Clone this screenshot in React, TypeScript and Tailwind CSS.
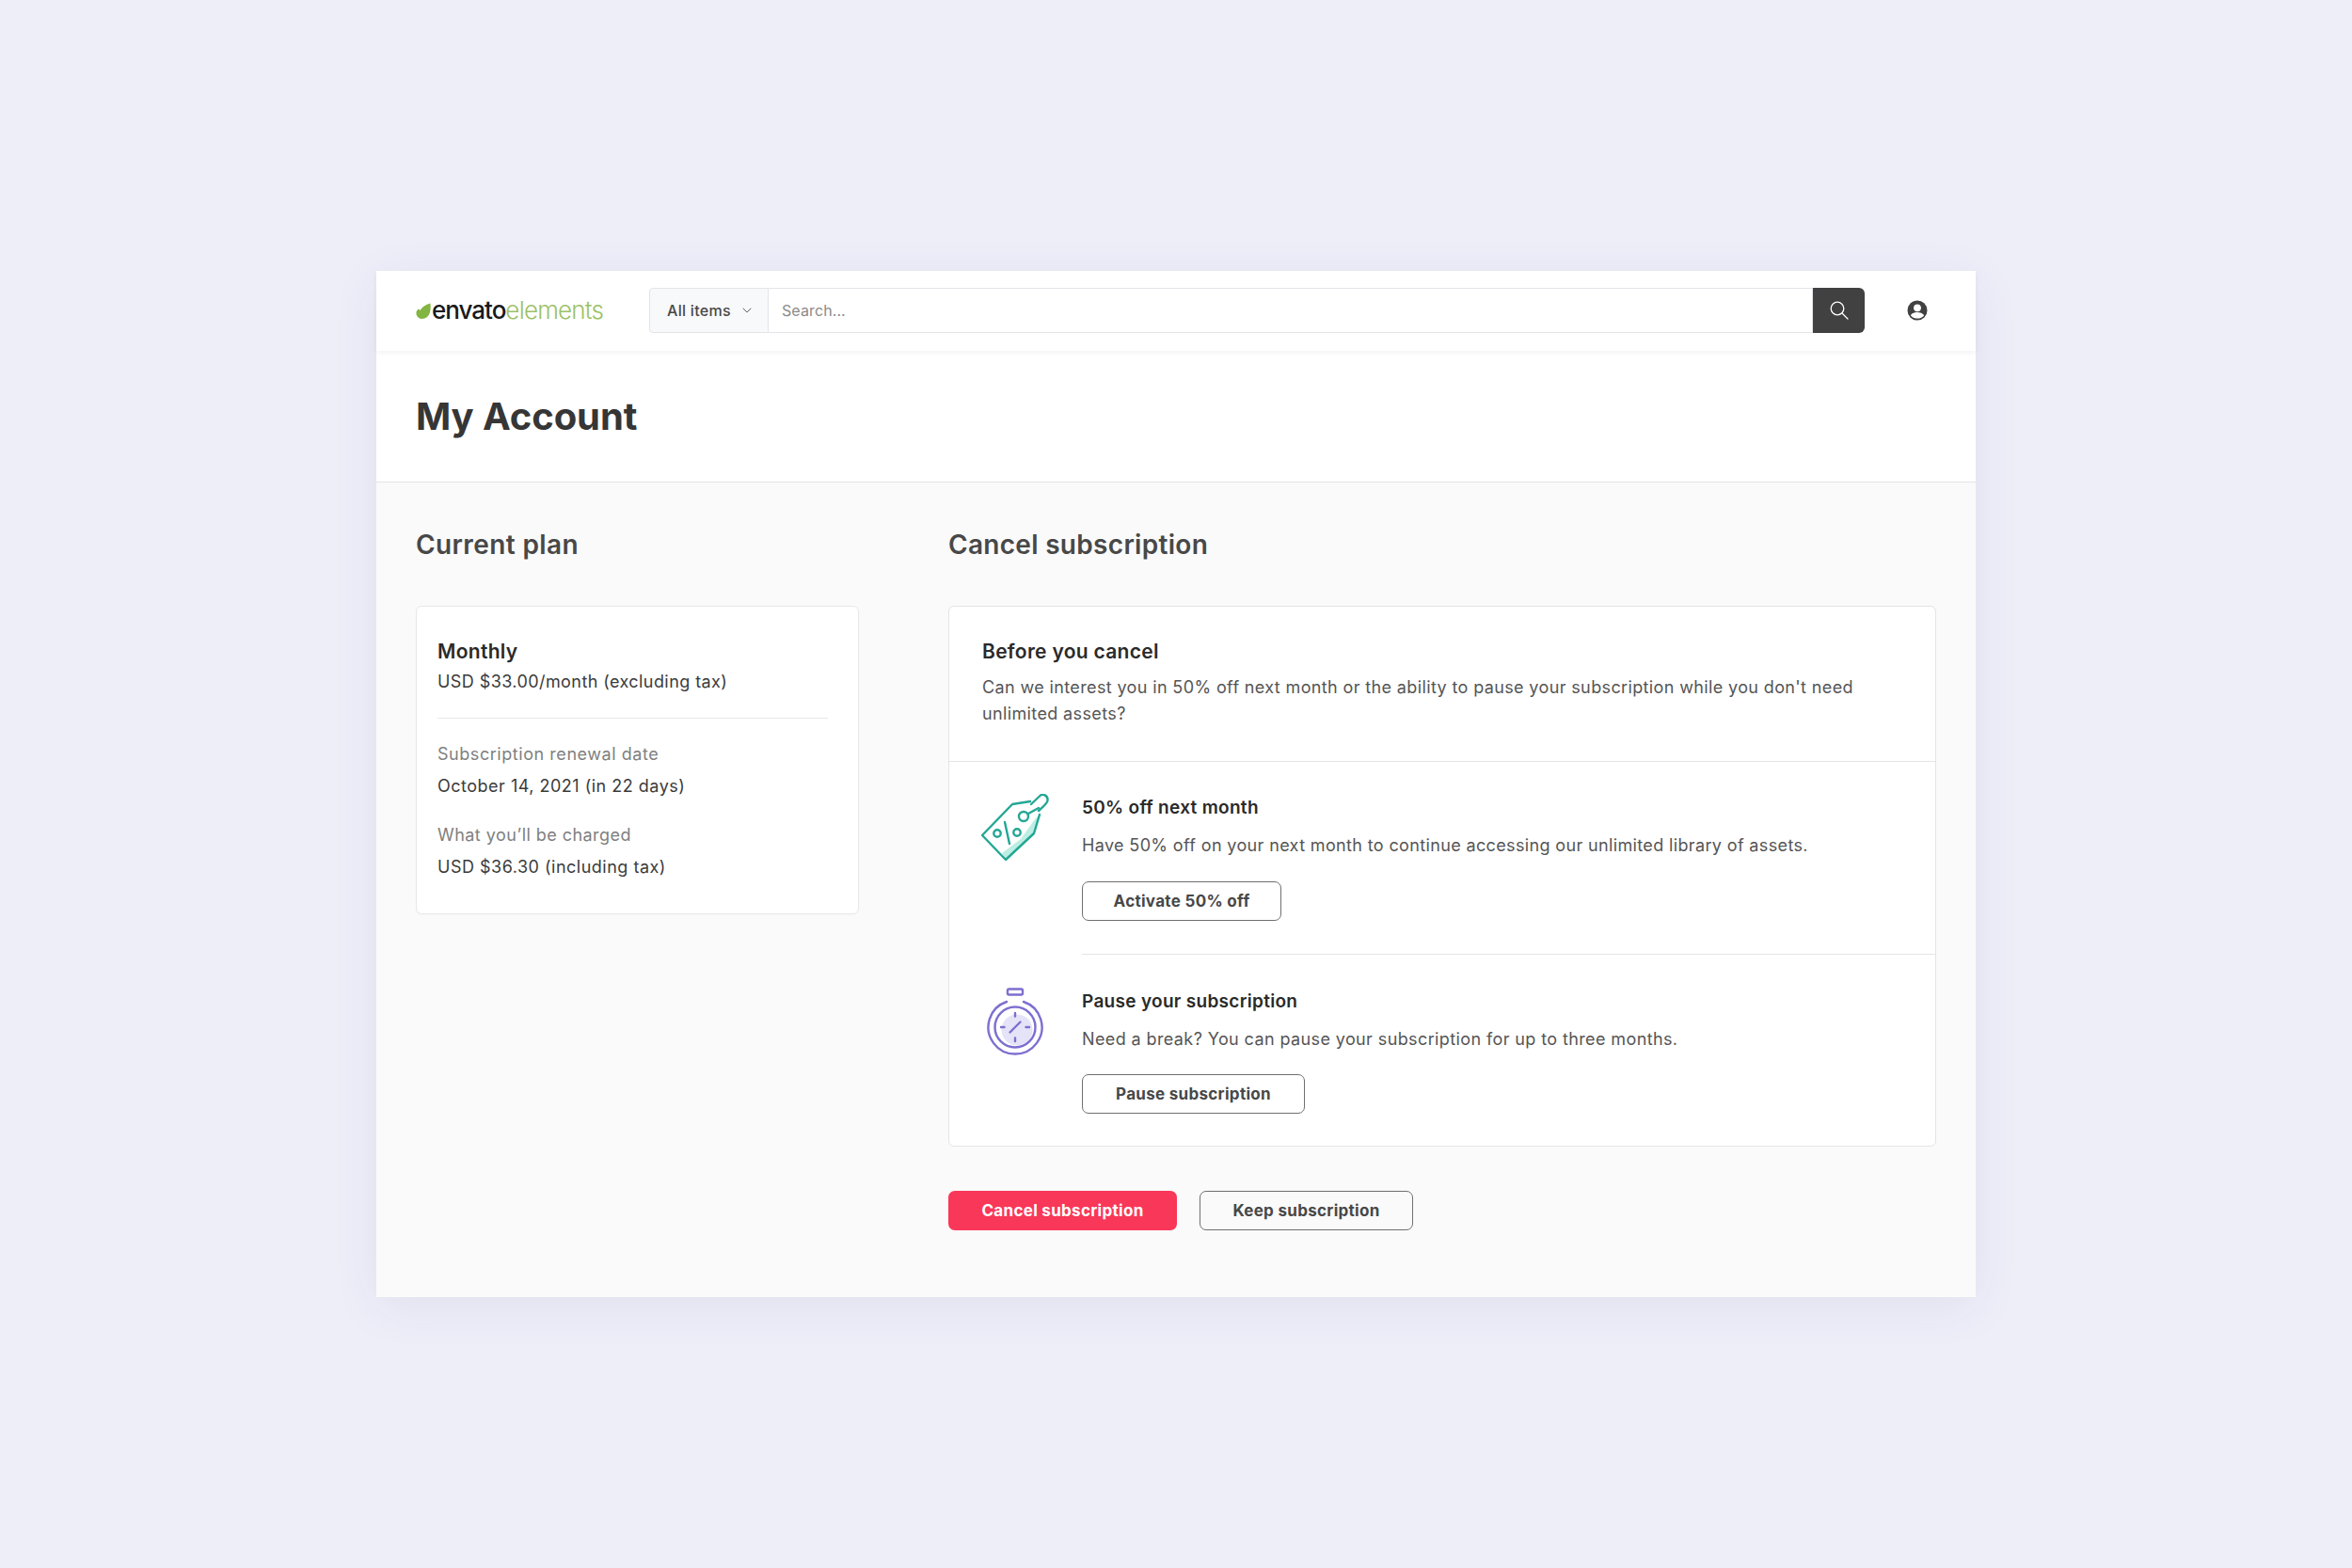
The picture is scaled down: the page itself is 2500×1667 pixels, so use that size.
import React from "react";
import { ChevronDown } from "lucide-react";

const body = "font-['Inter','Liberation_Sans',sans-serif]";
const display = "font-['Inter','Liberation_Sans',sans-serif]";

function Logo() {
  return (
    <div className="flex items-center">
      <svg width="16" height="18" viewBox="0 0 16 18" className="mr-[1px] mt-[1px]">
        <path d="M15.5 0.5C16 7 15.5 12 12 15 8 18 2.6 17.5 0.8 13 -0.2 10 1 7.5 3 6.6 3.8 7 4.2 7.6 4.6 8 6.5 4.5 10 2 15.5 0.5Z" fill="#82b541" />
      </svg>
      <span className="font-['Inter',sans-serif] text-[26px] font-medium leading-none tracking-[-1px] text-[#191919]">envato</span>
      <span className="font-['Inter',sans-serif] text-[26px] font-light leading-none tracking-[-0.8px] text-[#9cc165]">elements</span>
    </div>
  );
}

function TagIcon() {
  return (
    <svg width="74" height="74" viewBox="0 0 74 74" fill="none" stroke="#25a794" strokeWidth="2.4" strokeLinejoin="round" strokeLinecap="round" className="-mt-[1px]">
      <path d="M62 22 L56 42 L26 70 L22 63 L30 57 L42 48 L57 27 Z" fill="#bdeee3" stroke="none" />
      <path d="M52 8 L33 11 L1 44 L26 70 L56 42 L62 22" />
      <path d="M53 11 L63 1.5 C66 -0.5 71 2 70.5 7 C70.5 9 69 11 61 18" />
      <circle cx="45" cy="24" r="5" />
      <path d="M50 21 L61 15" />
      <circle cx="17" cy="42" r="3.7" />
      <circle cx="38" cy="41" r="3.7" />
      <path d="M25 30 L30 53" />
    </svg>
  );
}

function WatchIcon() {
  return (
    <svg width="60" height="72" viewBox="0 0 60 72" fill="none" stroke="#7d6fd0" strokeWidth="2.4" strokeLinecap="round" strokeLinejoin="round" className="-mt-[1px]">
      <circle cx="32" cy="45" r="16.5" fill="#e4e3f7" stroke="none" />
      <rect x="22" y="1.5" width="16" height="6" rx="1.5" />
      <path d="M21 15 A28.5 28.5 0 1 0 39 15" />
      <circle cx="30" cy="42" r="21.5" />
      <path d="M30 27 V30.5 M30 53.5 V57 M15 42 H18.5 M41.5 42 H45" />
      <path d="M24.5 47.5 L35.5 36.5" />
    </svg>
  );
}

function OutlineButton({ children, className }: { children: React.ReactNode; className: string }) {
  return (
    <button className={`flex h-[42px] items-center justify-center rounded-[7px] border-[1.5px] border-[#6f6f6f] pt-[1px] font-['Inter',sans-serif] text-[17px] font-bold tracking-[0.3px] text-[#484848] ${className}`}>
      {children}
    </button>
  );
}

export default function App() {
  return (
    <div className={`flex h-[1667px] items-center justify-center bg-[#edeef8] ${body}`}>
      <div className="w-[1700px] bg-white shadow-[0_10px_50px_rgba(60,60,110,0.07)]">
        <header className="relative flex h-[85px] items-center pl-[42px] pr-[51px] pb-[1px] shadow-[0_2px_6px_rgba(0,0,0,0.05)]">
          <div className="w-[248px]">
            <Logo />
          </div>
          <div className="flex h-[48px] flex-1">
            <div className="flex w-[127px] items-center gap-[9px] rounded-l-[4px] border border-[#e3e4e8] bg-[#f8f9fb] pl-[18px] text-[16px] font-medium tracking-[0.3px] text-[#484848]">
              All items
              <ChevronDown size={16} strokeWidth={1.4} className="text-[#555555]" />
            </div>
            <div className="flex flex-1 items-center border-y border-r border-[#e3e4e8] pl-[14px] text-[16px] tracking-[0.1px] text-[#8b8b8b]">Search...</div>
            <div className="flex w-[55px] items-center justify-center rounded-r-[6px] bg-[#414141]">
              <svg width="20" height="20" viewBox="0 0 20 20" fill="none" stroke="#fff" strokeWidth="1.3" strokeLinecap="round">
                <circle cx="8" cy="8" r="6.8" />
                <path d="M13 13 L19 19" />
              </svg>
            </div>
          </div>
          <svg width="22" height="22" viewBox="0 0 22 22" className="ml-[45px]">
            <circle cx="11" cy="11" r="10.5" fill="#414141" />
            <circle cx="11" cy="8.3" r="3.9" fill="#fff" />
            <path d="M3.8 16.2C5.4 13.7 8 12.9 11 12.9s5.6.8 7.2 3.3C16.5 18.4 14 19.6 11 19.6s-5.5-1.2-7.2-3.4Z" fill="#fff" />
          </svg>
        </header>

        <div className="flex h-[140px] items-center border-b border-[#e4e4e4] pl-[42px] pt-[1px]">
          <h1 className={`${display} text-[40px] font-bold leading-none tracking-[-0.1px] text-[#363636]`}>My Account</h1>
        </div>

        <main className="flex gap-[95px] bg-[#fafafa] px-[42px] pt-[48px] pb-[71px]">
          <section className="w-[471px] shrink-0">
            <h2 className="h-[34px] text-[28px] font-semibold leading-[36px] tracking-[0.4px] text-[#484848]">Current plan</h2>
            <div className="mt-[49px] rounded-[6px] border border-[#e8e8e8] bg-white pl-[22px] pr-[32px] pt-[34px] pb-[35px] shadow-[0_1px_2px_rgba(0,0,0,0.02)]">
              <div className="text-[21px] font-semibold leading-[28px] tracking-[0.3px] text-[#2a2a2a]">Monthly</div>
              <div className="mt-[4px] text-[18px] leading-[28px] tracking-[0.42px] text-[#3b3b3b]">USD $33.00/month (excluding tax)</div>
              <div className="mt-[24px] border-t border-[#e8e8e8]" />
              <div className="mt-[24px] text-[18px] leading-[28px] tracking-[0.55px] text-[#808080]">Subscription renewal date</div>
              <div className="mt-[6px] text-[18px] leading-[28px] tracking-[0.5px] text-[#3b3b3b]">October 14, 2021 (in 22 days)</div>
              <div className="mt-[24px] text-[18px] leading-[28px] tracking-[0.45px] text-[#808080]">What you’ll be charged</div>
              <div className="mt-[6px] text-[18px] leading-[28px] tracking-[0.5px] text-[#3b3b3b]">USD $36.30 (including tax)</div>
            </div>
          </section>

          <section className="flex-1">
            <h2 className="h-[34px] text-[28px] font-semibold leading-[36px] tracking-[0.3px] text-[#484848]">Cancel subscription</h2>
            <div className="mt-[49px] rounded-[6px] border border-[#e4e4e4] bg-white">
              <div className="border-b border-[#e4e4e4] pl-[35px] pr-[60px] pt-[34px] pb-[36px]">
                <div className="text-[21px] font-semibold leading-[28px] tracking-[0.3px] text-[#2a2a2a]">Before you cancel</div>
                <p className="mt-[10px] text-[18px] leading-[28px] tracking-[0.37px] text-[#555555]">
                  Can we interest you in 50% off next month or the ability to pause your subscription while you don't need unlimited assets?
                </p>
              </div>

              <div className="flex pl-[34px] pt-[35px]">
                <div className="w-[107px] shrink-0"><TagIcon /></div>
                <div className="flex-1 border-b border-[#e4e4e4] pb-[35px]">
                  <div className="text-[19px] font-semibold leading-[28px] tracking-[0.3px] text-[#2a2a2a]">50% off next month</div>
                  <p className="mt-[12px] text-[18px] leading-[28px] tracking-[0.36px] text-[#555555]">Have 50% off on your next month to continue accessing our unlimited library of assets.</p>
                  <OutlineButton className="mt-[24px] w-[212px]">Activate 50% off</OutlineButton>
                </div>
              </div>

              <div className="flex pl-[40px] pt-[36px] pb-[34px]">
                <div className="w-[101px] shrink-0"><WatchIcon /></div>
                <div className="flex-1">
                  <div className="text-[19px] font-semibold leading-[28px] tracking-[0.3px] text-[#2a2a2a]">Pause your subscription</div>
                  <p className="mt-[12px] text-[18px] leading-[28px] tracking-[0.39px] text-[#555555]">Need a break? You can pause your subscription for up to three months.</p>
                  <OutlineButton className="mt-[23px] w-[237px]">Pause subscription</OutlineButton>
                </div>
              </div>
            </div>

            <div className="mt-[47px] flex gap-[24px]">
              <button className="flex h-[42px] w-[243px] items-center justify-center rounded-[7px] bg-[#f93759] pt-[1px] text-[17px] font-bold tracking-[0.3px] text-white">Cancel subscription</button>
              <OutlineButton className="w-[227px]">Keep subscription</OutlineButton>
            </div>
          </section>
        </main>
      </div>
    </div>
  );
}
